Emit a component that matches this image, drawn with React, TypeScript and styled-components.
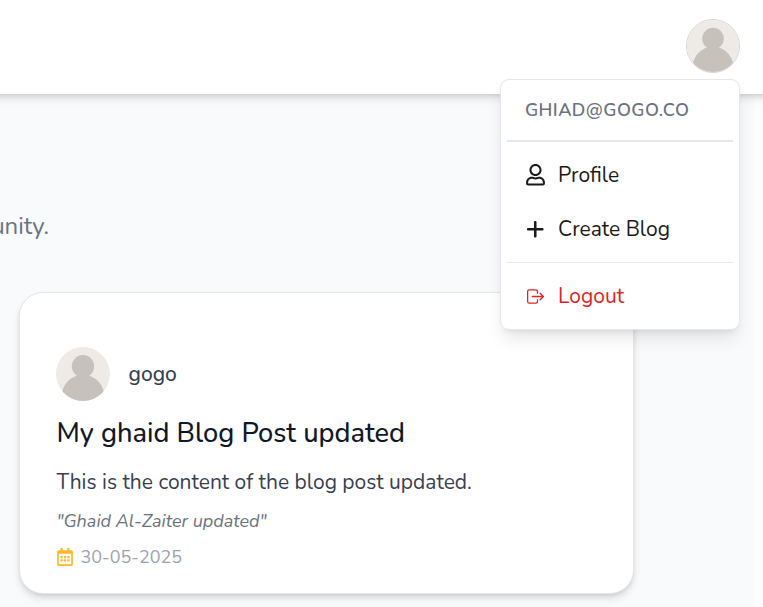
import React from "react";
import styled, { createGlobalStyle } from "styled-components";
import { FaRegUser, FaRegCalendarAlt } from "react-icons/fa";
import { FaPlus } from "react-icons/fa6";
import { IoLogOutOutline } from "react-icons/io5";

const GlobalStyle = createGlobalStyle`
  *, *::before, *::after { box-sizing: border-box; }
  body {
    margin: 0;
    background: #fdfdfe;
    font-family: Nunito, Lato, "Open Sans", sans-serif;
    overflow: hidden;
  }
  h2, p { margin: 0; font-weight: 400; }
`;

const Page = styled.div`
  position: relative;
  width: 763px;
  height: 607px;
  overflow: hidden;
`;

const Header = styled.header`
  position: relative;
  z-index: 1;
  display: flex;
  justify-content: flex-end;
  height: 94px;
  margin: 0 -20px;
  padding: 19px 43px 0 0;
  background: #fff;
  box-shadow: 0 5px 9px -1px rgba(0, 0, 0, 0.13), 0 2px 5px -2px rgba(0, 0, 0, 0.14);
`;

const Main = styled.main`
  width: 754px;
  height: 513px;
  padding: 116px 0 0 19px;
  background: #f9fafc;
`;

const Intro = styled.p`
  display: flex;
  justify-content: flex-end;
  width: 49px;
  height: 32px;
  margin: 0 0 50px -19px;
  font-size: 24px;
  line-height: 32px;
  white-space: nowrap;
  color: #6b7280;
`;

const Avatar = styled.svg<{ $ringed?: boolean }>`
  display: block;
  flex: none;
  width: 54px;
  height: 54px;
  border-radius: 50%;
  border: ${(p) => (p.$ringed ? "1px solid #d1d5db" : "none")};
`;

const Card = styled.article`
  width: 615px;
  height: 302px;
  padding: 54px 36px 0;
  border: 1px solid #e5e7eb;
  border-radius: 24px;
  background: #fff;
  box-shadow: 0 5px 9px -1px rgba(0, 0, 0, 0.13), 0 2px 5px -2px rgba(0, 0, 0, 0.14);
  white-space: nowrap;
`;

const Author = styled.div`
  display: flex;
  align-items: center;
  gap: 18.5px;
  font-size: 21px;
  font-weight: 500;
  color: #374151;
`;

const Title = styled.h2`
  margin: 14px 0 0 0.5px;
  font-size: 27.2px;
  font-weight: 500;
  line-height: 38px;
  color: #111827;
`;

const Content = styled.p`
  margin: 14px 0 0 0.5px;
  font-size: 21px;
  line-height: 30px;
  color: #374151;
`;

const Quote = styled.p`
  margin: 12px 0 0 0.5px;
  font-size: 18px;
  font-style: italic;
  line-height: 24px;
  color: #6b7280;
`;

const DateRow = styled.div`
  display: flex;
  align-items: center;
  gap: 6.5px;
  margin-top: 12px;
  font-size: 18px;
  line-height: 24px;
  color: #9ca3af;
  svg { color: #fdb827; }
`;

const Menu = styled.nav`
  position: absolute;
  z-index: 2;
  top: 79px;
  right: 23px;
  width: 240px;
  height: 251px;
  padding: 6px;
  border: 1px solid #e5e7eb;
  border-radius: 9px;
  background: #fff;
  box-shadow: 0 11px 17px -3px rgba(0, 0, 0, 0.1), 0 4px 7px -4px rgba(0, 0, 0, 0.1);
  white-space: nowrap;
`;

const Email = styled.div`
  height: 56px;
  padding-left: 18px;
  border-bottom: 2px solid #e5e7eb;
  font-size: 18px;
  font-weight: 600;
  line-height: 49px;
  letter-spacing: 0.025em;
  color: #6b7280;
`;

const Group = styled.div<{ $divided?: boolean }>`
  padding: 6px 0;
  border-top: ${(p) => (p.$divided ? "1px solid #e5e7eb" : "none")};
`;

const Item = styled.div<{ $danger?: boolean }>`
  display: flex;
  align-items: center;
  height: 54px;
  padding-left: 18px;
  font-size: 21px;
  color: ${(p) => (p.$danger ? "#dc2626" : "#1a1a1a")};
`;

const IconSlot = styled.span`
  display: flex;
  justify-content: center;
  width: 21px;
  margin-right: 12px;
`;

function Person({ ringed }: { ringed?: boolean }) {
  return (
    <Avatar $ringed={ringed} viewBox="0 0 54 54" aria-hidden="true">
      <rect width="54" height="54" fill="#eeebe6" />
      <circle cx="27" cy="19.3" r="11.2" fill="#c6c2bb" />
      <ellipse cx="27" cy="50" rx="21.5" ry="22.3" fill="#c6c2bb" />
    </Avatar>
  );
}

export default function App() {
  return (
    <Page>
      <GlobalStyle />
      <Header>
        <Person ringed />
      </Header>
      <Main>
        <Intro>unity.</Intro>
        <Card>
          <Author>
            <Person />
            <span>gogo</span>
          </Author>
          <Title>My ghaid Blog Post updated</Title>
          <Content>This is the content of the blog post updated.</Content>
          <Quote>"Ghaid Al-Zaiter updated"</Quote>
          <DateRow>
            <FaRegCalendarAlt size={18} />
            <span>30-05-2025</span>
          </DateRow>
        </Card>
      </Main>
      <Menu>
        <Email>GHIAD@GOGO.CO</Email>
        <Group>
          <Item>
            <IconSlot><FaRegUser size={21.5} /></IconSlot>
            <span>Profile</span>
          </Item>
          <Item>
            <IconSlot><FaPlus size={20.5} /></IconSlot>
            <span>Create Blog</span>
          </Item>
        </Group>
        <Group $divided>
          <Item $danger>
            <IconSlot><IoLogOutOutline size={21} /></IconSlot>
            <span>Logout</span>
          </Item>
        </Group>
      </Menu>
    </Page>
  );
}
